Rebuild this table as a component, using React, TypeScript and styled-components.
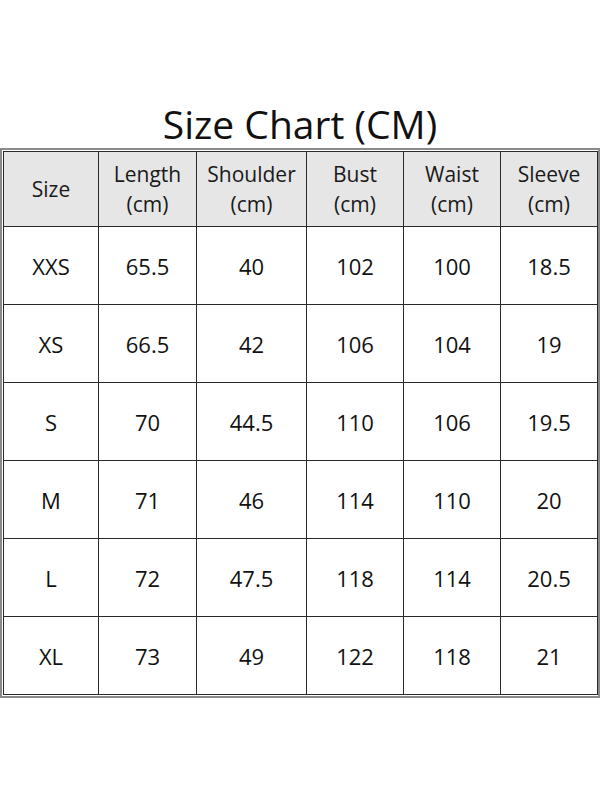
import styled, { createGlobalStyle } from 'styled-components'

const GlobalStyle = createGlobalStyle`
  html, body {
    margin: 0;
    padding: 0;
    background: #fff;
  }
  body {
    font-family: "Open Sans", "Noto Sans", sans-serif;
    color: #111;
  }
`

const Page = styled.div`
  width: 600px;
  height: 800px;
  padding-top: 100px;
  box-sizing: border-box;
`

const Title = styled.h1`
  margin: 0;
  height: 48px;
  font-size: 39px;
  font-weight: 400;
  line-height: 48px;
  text-align: center;
  color: #111;
`

const Frame = styled.div`
  width: 600px;
  box-sizing: border-box;
  border: 2px solid #8a8a8a;
  padding: 1px;
`

const Table = styled.table`
  width: 100%;
  border-collapse: collapse;
  table-layout: fixed;
`

const HeadCell = styled.th`
  height: 74px;
  padding: 0;
  border: 1px solid #2a2a2a;
  background: #e6e6e6;
  font-size: 21px;
  font-weight: 400;
  line-height: 30px;
  text-align: center;
  color: #1a1a1a;
`

const Cell = styled.td`
  height: 77px;
  padding: 0;
  border: 1px solid #2a2a2a;
  font-size: 22px;
  text-align: center;
  color: #111;
`

const columns = [
  { label: 'Size', width: 95 },
  { label: 'Length', width: 98, unit: true },
  { label: 'Shoulder', width: 110, unit: true },
  { label: 'Bust', width: 97, unit: true },
  { label: 'Waist', width: 97, unit: true },
  { label: 'Sleeve', width: 97, unit: true },
]

const rows = [
  ['XXS', '65.5', '40', '102', '100', '18.5'],
  ['XS', '66.5', '42', '106', '104', '19'],
  ['S', '70', '44.5', '110', '106', '19.5'],
  ['M', '71', '46', '114', '110', '20'],
  ['L', '72', '47.5', '118', '114', '20.5'],
  ['XL', '73', '49', '122', '118', '21'],
]

export default function App() {
  return (
    <Page>
      <GlobalStyle />
      <Title>Size Chart (CM)</Title>
      <Frame>
        <Table>
          <colgroup>
            {columns.map((c) => (
              <col key={c.label} style={{ width: c.width }} />
            ))}
          </colgroup>
          <thead>
            <tr>
              {columns.map((c) => (
                <HeadCell key={c.label}>
                  {c.label}
                  {c.unit && (
                    <>
                      <br />
                      (cm)
                    </>
                  )}
                </HeadCell>
              ))}
            </tr>
          </thead>
          <tbody>
            {rows.map((r) => (
              <tr key={r[0]}>
                {r.map((v, i) => (
                  <Cell key={i}>{v}</Cell>
                ))}
              </tr>
            ))}
          </tbody>
        </Table>
      </Frame>
    </Page>
  )
}
